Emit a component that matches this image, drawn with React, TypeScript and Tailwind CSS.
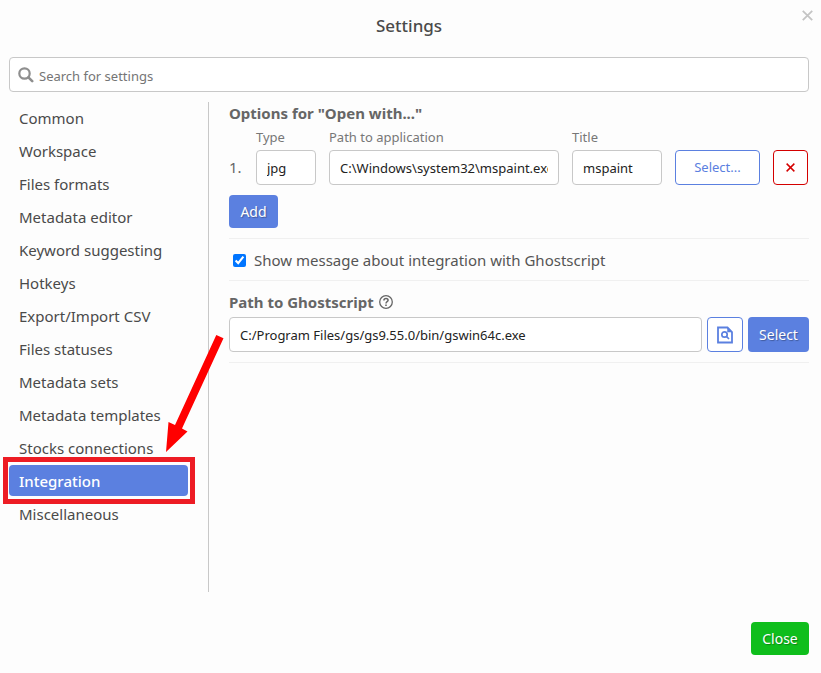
import { useState } from "react";

const sections = [
  "Common",
  "Workspace",
  "Files formats",
  "Metadata editor",
  "Keyword suggesting",
  "Hotkeys",
  "Export/Import CSV",
  "Files statuses",
  "Metadata sets",
  "Metadata templates",
  "Stocks connections",
  "Integration",
  "Miscellaneous",
];

const field =
  "h-[35px] min-w-0 rounded-[4px] border border-[#c8c8c8] bg-white px-[10px] text-[13px] text-[#222] outline-none";
const solidButton =
  "rounded-[4px] bg-[#5b80e0] text-[14px] text-white text-shadow-[1px_1px_1px_rgb(0_0_0/0.3)]";
const outlineButton =
  "flex h-[35px] items-center justify-center rounded-[4px] border bg-white text-[13px]";

function SearchIcon() {
  return (
    <svg className="h-4 w-4 shrink-0" viewBox="0 0 16 16" fill="none" stroke="#8e8e8e" aria-hidden="true">
      <circle cx="6.5" cy="6.5" r="5.2" strokeWidth="2.2" />
      <path d="M10.4 10.4 14.2 14.2" strokeWidth="2.6" strokeLinecap="round" />
    </svg>
  );
}

function CrossIcon({ className }: { className: string }) {
  return (
    <svg className={className} viewBox="0 0 10 10" fill="none" stroke="currentColor" strokeWidth="1.6" aria-hidden="true">
      <path d="M0.7 0.7 9.3 9.3M9.3 0.7 0.7 9.3" />
    </svg>
  );
}

function HelpIcon() {
  return (
    <svg className="h-[14px] w-[14px]" viewBox="0 0 14 14" fill="none" stroke="#666" aria-hidden="true">
      <circle cx="7" cy="7" r="6.3" strokeWidth="1.3" />
      <path d="M4.9 5.5C4.9 4.2 5.8 3.4 7 3.400s2.100.8 2.100 1.900C9.100 6.600 7 6.800 7 8.400" strokeWidth="1.5" />
      <path d="M7 9.400v1.600" strokeWidth="1.600" />
    </svg>
  );
}

function FindFileIcon() {
  return (
    <svg className="h-[18px] w-4" viewBox="0 0 16 18" fill="none" stroke="#5b80e0" aria-hidden="true">
      <path d="M1 1.500h9.500L15 6v10.500H1z" strokeWidth="1.800" />
      <path d="M10.500 1.500V6H15z" fill="#5b80e0" strokeWidth="0.500" />
      <circle cx="7.500" cy="8.500" r="2.700" strokeWidth="1.700" />
      <path d="m9.400 10.400 2.600 2.600" strokeWidth="1.700" />
    </svg>
  );
}

function Pointer() {
  return (
    <>
      <div className="pointer-events-none absolute -top-2 -right-[7px] -bottom-2 -left-[6px] border-[5px] border-[#ed1c24]" />
      <svg
        className="pointer-events-none absolute bottom-[42px] left-[156px] h-[120px] w-[60px]"
        viewBox="0 0 60 120"
        fill="#ff0000"
        aria-hidden="true"
      >
        <path d="M51.300 1 58.500 4.200 17 94.500 22.500 97.500 1 118 3.500 88 10 91Z" />
      </svg>
    </>
  );
}

export default function App() {
  const [active, setActive] = useState("Integration");
  const [notify, setNotify] = useState(true);

  return (
    <main className="relative min-h-screen bg-[#fdfdfd] pr-3 pb-[18px] pl-[9px] font-['Noto_Sans',sans-serif] text-[#4a4a4a]">
      <h1 className="pt-[13px] text-center text-[17px] leading-[26px] font-medium">Settings</h1>
      <button type="button" aria-label="Close settings" className="absolute top-[10px] right-2 text-[#c4c4c4]">
        <CrossIcon className="h-[11px] w-[11px]" />
      </button>

      <label className="mt-[18px] flex h-[35px] items-center gap-[5px] rounded-[4px] border border-[#c8c8c8] bg-white px-2">
        <SearchIcon />
        <input
          type="search"
          aria-label="Search for settings"
          placeholder="Search for settings"
          className="h-full min-w-0 flex-1 bg-transparent pt-[2px] text-[13px] outline-none placeholder:text-[#757575]"
        />
      </label>

      <div className="mt-[10px] flex">
        <nav className="flex min-h-[490px] w-[200px] shrink-0 flex-col gap-[2px] border-r border-[#c8c8c8] pr-5">
          {sections.map((name) => (
            <div key={name} className="relative">
              <button
                type="button"
                onClick={() => setActive(name)}
                className={
                  name === active
                    ? "block h-[31px] w-full rounded-[4px] bg-[#5b80e0] px-[10px] pt-[2px] text-left text-[15px] font-medium text-white"
                    : "block h-[31px] w-full px-[10px] pt-[2px] text-left text-[15px]"
                }
              >
                {name}
              </button>
              {name === "Integration" && <Pointer />}
            </div>
          ))}
        </nav>

        <div className="min-w-0 flex-1 pl-5">
          <section className="border-b border-[#f0f0f0] pb-[10px]">
            <h2 className="text-[15px] leading-[22px] font-bold text-[#666]">Options for "Open with..."</h2>
            <div className="flex items-end gap-[13px] pr-px">
              <span className="w-[14px] text-[15px] leading-[35px] text-[#666]">1.</span>
              <label className="flex w-[60px] flex-col text-[13px] leading-[26px] text-[#777]">
                Type
                <input className={field} defaultValue="jpg" />
              </label>
              <label className="flex min-w-0 flex-1 flex-col text-[13px] leading-[26px] text-[#777]">
                Path to application
                <input className={field} defaultValue="C:\Windows\system32\mspaint.exe" />
              </label>
              <label className="flex w-[90px] flex-col text-[13px] leading-[26px] text-[#777]">
                Title
                <input className={field} defaultValue="mspaint" />
              </label>
              <button type="button" className={outlineButton + " w-[85px] border-[#5b80e0] text-[#5b80e0]"}>
                Select...
              </button>
              <button type="button" aria-label="Remove" className={outlineButton + " w-[35px] border-[#d40000] text-[#d40000]"}>
                <CrossIcon className="h-[9px] w-[9px]" />
              </button>
            </div>
            <button type="button" className={solidButton + " mt-[10px] block h-[33px] w-[49px]"}>
              Add
            </button>
          </section>

          <section className="flex h-[42px] items-center border-b border-[#f0f0f0] pt-[2px] pl-1">
            <label className="flex items-center gap-2 text-[15px] text-[#555]">
              <input
                type="checkbox"
                checked={notify}
                onChange={(e) => setNotify(e.target.checked)}
                className="h-[13px] w-[13px] accent-[#0075ff]"
              />
              Show message about integration with Ghostscript
            </label>
          </section>

          <section className="border-b border-[#f0f0f0] py-[10px]">
            <h2 className="mb-1 flex items-center gap-[5px] text-[15px] leading-[22px] font-bold text-[#666]">
              <label htmlFor="gs-path">Path to Ghostscript</label>
              <HelpIcon />
            </h2>
            <div className="flex gap-[5px]">
              <input id="gs-path" className={field + " flex-1"} defaultValue="C:/Program Files/gs/gs9.55.0/bin/gswin64c.exe" />
              <button type="button" aria-label="Find file" className={outlineButton + " w-9 border-[#5b80e0]"}>
                <FindFileIcon />
              </button>
              <button type="button" className={solidButton + " h-[35px] w-[61px]"}>
                Select
              </button>
            </div>
          </section>
        </div>
      </div>

      <footer className="mt-[30px] flex justify-end">
        <button
          type="button"
          className="h-[33px] w-[58px] rounded-[4px] bg-[#0fbe1c] text-[14px] text-white text-shadow-[1px_1px_1px_rgb(0_0_0/0.3)]"
        >
          Close
        </button>
      </footer>
    </main>
  );
}
